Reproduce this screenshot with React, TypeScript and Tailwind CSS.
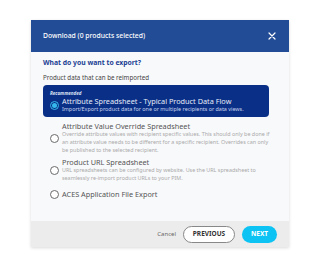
import React, { useState } from 'react';

const options = [
  {
    id: 'attr',
    title: 'Attribute Spreadsheet - Typical Product Data Flow',
    desc: ['Import/Export product data for one or multiple recipients or data views.'],
    recommended: true,
    gap: 'mt-[3px]',
  },
  {
    id: 'override',
    title: 'Attribute Value Override Spreadsheet',
    desc: [
      'Override attribute values with recipient specific values. This should only be done if',
      'an attribute value needs to be different for a specific recipient. Overrides can only',
      'be published to the selected recipient.',
    ],
    gap: 'mt-[6px]',
  },
  {
    id: 'url',
    title: 'Product URL Spreadsheet',
    desc: [
      'URL spreadsheets can be configured by website. Use the URL spreadsheet to',
      'seamlessly re-import product URLs to your PIM.',
    ],
    gap: 'mt-[5px]',
  },
  { id: 'aces', title: 'ACES Application File Export', desc: [], gap: 'mt-[8px]' },
];

const Radio = ({ checked }: { checked: boolean }) =>
  checked ? (
    <span className="flex h-[9px] w-[9px] shrink-0 items-center justify-center rounded-full border border-[#35b8ec] bg-[#0a2f86]">
      <span className="h-[5px] w-[5px] rounded-full bg-[#35b8ec]" />
    </span>
  ) : (
    <span className="h-[9px] w-[9px] shrink-0 rounded-full border border-[#6a6a6a] bg-white" />
  );

export default function App() {
  const [selected, setSelected] = useState('attr');

  return (
    <div className="min-h-[280px] w-[320px] bg-white pt-[20px]" style={{ fontFamily: "'Noto Sans', sans-serif" }}>
      <div className="mx-auto w-[258px] shadow-[0_1px_3px_rgba(0,0,0,0.15)]">
        <div className="flex h-[32px] items-center justify-between bg-[#234c96] pl-[12px] pr-[13px]">
          <span className="text-[6.8px] font-medium text-white">Download (0 products selected)</span>
          <svg width="8" height="8" viewBox="0 0 8 8" className="text-white">
            <path d="M1 1L7 7M7 1L1 7" stroke="currentColor" strokeWidth="1.2" strokeLinecap="round" />
          </svg>
        </div>

        <div className="bg-[#f8f9fb] pb-[22px] pl-[12px] pr-[20px] pt-[6px]">
          <div className="text-[6.8px] font-bold leading-[9px] text-[#1b3f93]">What do you want to export?</div>
          <div className="mt-[6px] text-[6.2px] leading-[9px] text-[#444]">Product data that can be reimported</div>

          <div className="flex flex-col">
            {options.map((o) => {
              const isSel = selected === o.id;
              return (
                <div
                  key={o.id}
                  onClick={() => setSelected(o.id)}
                  className={`flex cursor-pointer flex-col px-[7px] ${o.gap} ${
                    isSel ? 'rounded-[4px] bg-[#0a2f86] pb-[4px] pt-[5px]' : ''
                  }`}
                >
                  {o.recommended && (
                    <span className="mb-[2px] text-[4.5px] font-bold italic leading-[6px] text-[#dbe3f5]">Recommended</span>
                  )}
                  <div className="flex items-center gap-[3px]">
                    <Radio checked={isSel} />
                    <div className="flex flex-col">
                      <span className={`text-[7.3px] leading-[7px] ${isSel ? 'text-[#e6ecf8]' : 'text-[#555]'}`}>{o.title}</span>
                      {o.desc.map((d, i) => (
                        <span
                          key={i}
                          className={`whitespace-nowrap text-[5.4px] leading-[8px] ${isSel ? 'text-[#c5d2ee]' : 'text-[#aaa]'}`}
                        >
                          {d}
                        </span>
                      ))}
                    </div>
                  </div>
                </div>
              );
            })}
          </div>
        </div>

        <div className="flex h-[26px] items-center justify-end gap-[7px] bg-[#ececec] pr-[12px]">
          <button className="text-[6px] text-[#666]">Cancel</button>
          <button className="flex h-[17px] w-[52px] items-center justify-center rounded-full border border-[#888] bg-white text-[6.5px] font-bold text-[#333]">
            PREVIOUS
          </button>
          <button className="flex h-[17px] w-[35px] items-center justify-center rounded-full bg-[#0cc3f3] text-[6.5px] font-bold text-white">
            NEXT
          </button>
        </div>
      </div>
    </div>
  );
}
